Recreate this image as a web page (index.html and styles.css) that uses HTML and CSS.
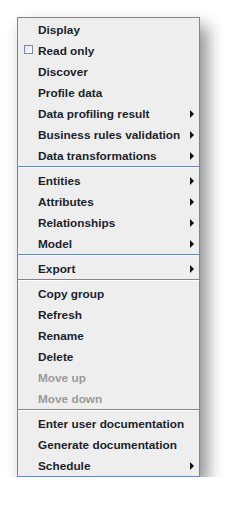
FILE: index.html
```html
<!DOCTYPE html>
<html>
<head>
<meta charset="utf-8">
<link rel="stylesheet" href="styles.css">
</head>
<body>
<div class="menu">
  <div class="item"><span class="gutter"></span><span class="label">Display</span></div>
  <div class="item"><span class="gutter"><span class="check"></span></span><span class="label">Read only</span></div>
  <div class="item"><span class="gutter"></span><span class="label">Discover</span></div>
  <div class="item"><span class="gutter"></span><span class="label">Profile data</span></div>
  <div class="item"><span class="gutter"></span><span class="label">Data profiling result</span><span class="arrow"></span></div>
  <div class="item"><span class="gutter"></span><span class="label">Business rules validation</span><span class="arrow"></span></div>
  <div class="item"><span class="gutter"></span><span class="label">Data transformations</span><span class="arrow"></span></div>
  <div class="sep"></div>
  <div class="item"><span class="gutter"></span><span class="label">Entities</span><span class="arrow"></span></div>
  <div class="item"><span class="gutter"></span><span class="label">Attributes</span><span class="arrow"></span></div>
  <div class="item"><span class="gutter"></span><span class="label">Relationships</span><span class="arrow"></span></div>
  <div class="item"><span class="gutter"></span><span class="label">Model</span><span class="arrow"></span></div>
  <div class="sep"></div>
  <div class="item"><span class="gutter"></span><span class="label">Export</span><span class="arrow"></span></div>
  <div class="sep"></div>
  <div class="item"><span class="gutter"></span><span class="label">Copy group</span></div>
  <div class="item"><span class="gutter"></span><span class="label">Refresh</span></div>
  <div class="item"><span class="gutter"></span><span class="label">Rename</span></div>
  <div class="item"><span class="gutter"></span><span class="label">Delete</span></div>
  <div class="item disabled"><span class="gutter"></span><span class="label">Move up</span></div>
  <div class="item disabled"><span class="gutter"></span><span class="label">Move down</span></div>
  <div class="sep"></div>
  <div class="item"><span class="gutter"></span><span class="label">Enter user documentation</span></div>
  <div class="item"><span class="gutter"></span><span class="label">Generate documentation</span></div>
  <div class="item"><span class="gutter"></span><span class="label">Schedule</span><span class="arrow"></span></div>
</div>
</body>
</html>
```
FILE: styles.css
```css
html, body {
  margin: 0;
  padding: 0;
  background: #ffffff;
}
body {
  padding: 17px 0 0 17px;
}
.menu {
  width: 181px;
  border: 1px solid #6c86c4;
  background: #eeeeee;
  padding: 1px 0 0 0;
  box-shadow: 7px 9px 16px rgba(0, 0, 0, 0.45);
  font-family: "Liberation Sans", Arial, sans-serif;
  font-weight: bold;
  font-size: 11.8px;
  color: #1c1f2c;
}
.item {
  display: flex;
  align-items: center;
  height: 21px;
  padding-right: 5px;
}
.gutter {
  width: 20px;
  flex: none;
  display: flex;
  align-items: center;
  padding-left: 6px;
  box-sizing: border-box;
}
.check {
  width: 7px;
  height: 7px;
  border: 1px solid #7f8ca3;
  background: linear-gradient(135deg, #d9e1ea, #ffffff);
  margin-top: -3px;
}
.label {
  flex: 1;
  white-space: nowrap;
}
.disabled {
  color: #9a9a9a;
}
.arrow {
  width: 0;
  height: 0;
  border-left: 4px solid #111111;
  border-top: 4px solid transparent;
  border-bottom: 4px solid transparent;
}
.sep {
  height: 1px;
  background: #6c86c4;
  border-bottom: 1px solid #ffffff;
  margin-bottom: 2px;
}
```
